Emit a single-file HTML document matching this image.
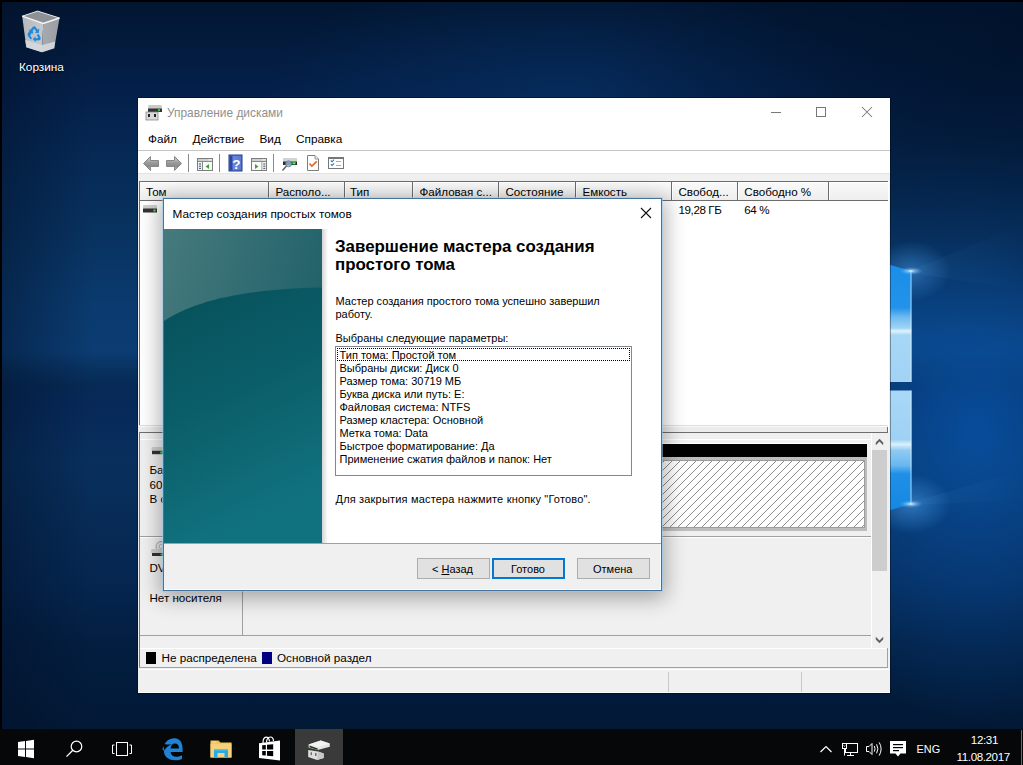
<!DOCTYPE html>
<html><head><meta charset="utf-8">
<style>
*{margin:0;padding:0;box-sizing:border-box}
html,body{width:1023px;height:765px;overflow:hidden;background:#000}
body{position:relative;font-family:"Liberation Sans",sans-serif;color:#000}
.a{position:absolute}
.t{position:absolute;white-space:nowrap;line-height:1}
svg{overflow:visible}
</style></head><body>
<div class="a" style="left:2px;top:2px;width:1021px;height:727px;overflow:hidden;background:
 radial-gradient(ellipse 40px 30px at 909px 502px, rgba(90,180,255,.45), rgba(90,180,255,0) 100%),
 radial-gradient(ellipse 40px 30px at 909px 269px, rgba(90,180,255,.4), rgba(90,180,255,0) 100%),
 radial-gradient(ellipse 420px 300px at 1021px 40px, rgba(1,18,42,.85), rgba(1,18,42,0) 100%),
 radial-gradient(ellipse 220px 290px at 975px 430px, rgba(8,82,165,.85), rgba(8,82,165,0) 100%),
 linear-gradient(90deg, rgba(2,16,40,.45) 0px, rgba(2,16,40,0) 90px),
 radial-gradient(ellipse 300px 120px at 560px 90px, rgba(8,55,110,.45), rgba(8,55,110,0) 100%),
 linear-gradient(180deg,#021631 0px,#04204a 90px,#062a56 160px,#08325f 230px,#0a3a6e 300px,#0b3c72 350px,#08315f 368px,#062a55 384px,#07295a 405px,#08305d 460px,#072b56 520px,#052650 580px,#031e40 640px,#021936 727px)"></div>
<svg class="a" style="left:0;top:0" width="1023" height="765">
 <defs>
  <linearGradient id="p1" x1="0" y1="0" x2="0" y2="1">
   <stop offset="0" stop-color="#1a8de8"/><stop offset="0.38" stop-color="#2293e8"/>
   <stop offset="0.46" stop-color="#6fbaf0"/><stop offset="0.55" stop-color="#9fd3f6"/><stop offset="0.575" stop-color="#e0f4fd"/>
   <stop offset="0.61" stop-color="#a6d7f6"/><stop offset="1" stop-color="#a2d3f5"/>
  </linearGradient>
  <linearGradient id="p2" x1="0" y1="0" x2="0" y2="1">
   <stop offset="0" stop-color="#a9d8f7"/><stop offset="0.4" stop-color="#9fd1f4"/>
   <stop offset="0.44" stop-color="#d8f1fd"/><stop offset="0.49" stop-color="#8fcaf2"/>
   <stop offset="0.61" stop-color="#6ab8ef"/><stop offset="0.68" stop-color="#1f90e6"/><stop offset="1" stop-color="#1587e2"/>
  </linearGradient>
  <radialGradient id="fl" cx="0.5" cy="0.5" r="0.5">
   <stop offset="0" stop-color="#ffffff" stop-opacity="1"/><stop offset="0.25" stop-color="#c8ecff" stop-opacity=".6"/><stop offset="1" stop-color="#4aa8f0" stop-opacity="0"/>
  </radialGradient>
  <linearGradient id="bm" x1="0" y1="0" x2="1" y2="0"><stop offset="0" stop-color="#6ab8f0" stop-opacity=".35"/><stop offset="1" stop-color="#6ab8f0" stop-opacity="0"/></linearGradient>
 </defs>
 <polygon points="912,270 1023,225 1023,290 912,273" fill="url(#bm)" opacity=".18"/>
 <polygon points="912,502 1023,470 1023,500 912,505" fill="url(#bm)" opacity=".22"/>
 <polygon points="880,262 911.5,271 911.5,382 880,382" fill="url(#p1)"/>
 <polygon points="880,390.5 911.5,390.5 911.5,504 880,513" fill="url(#p2)"/>
 <rect x="910.5" y="271" width="1" height="111" fill="#d9f1ff" opacity=".7"/>
 <rect x="910.5" y="390.5" width="1" height="113" fill="#d9f1ff" opacity=".7"/>
 <ellipse cx="911" cy="271" rx="12" ry="4" fill="url(#fl)"/>
 <ellipse cx="911" cy="504" rx="12" ry="4" fill="url(#fl)"/>
</svg>
<svg class="a" style="left:0;top:0" width="80" height="80">
 <defs>
  <linearGradient id="rbl" x1="0" y1="0" x2="1" y2="0"><stop offset="0" stop-color="#b4b8bd"/><stop offset="1" stop-color="#c6c9cd"/></linearGradient>
  <linearGradient id="rbr" x1="0" y1="0" x2="1" y2="0"><stop offset="0" stop-color="#a7abb0"/><stop offset="1" stop-color="#9a9ea3"/></linearGradient>
 </defs>
 <polygon points="22.2,16.2 43.2,23.4 42,52.3 26.3,47.2" fill="url(#rbl)"/>
 <polygon points="43.2,23.4 59.5,18 54.2,48.2 42,52.3" fill="url(#rbr)"/>
 <polygon points="22.2,16.2 37.6,11.1 59.5,18 43.2,23.4" fill="#8d9196"/>
 <polygon points="25.2,40 42.3,45 55.2,41.5 54.2,48.2 42,52.3 26.3,47.2" fill="#d5d8db" opacity=".9"/>
 <polyline points="22.2,16.2 37.6,11.1 59.5,18" fill="none" stroke="#e6e9ec" stroke-width="1"/>
 <polyline points="22.2,16.2 43.2,23.4 59.5,18" fill="none" stroke="#f4f6f8" stroke-width="1.4"/>
 <path d="M29.5 31 L33 26.8 Q34.2 25.6 35.4 26.8 L37.6 29.8 L39.4 28.8 L38.6 33.2 L34.6 32.6 L36.2 31.4 L34.2 28.8 L32 31.6 Z" fill="#1e88dc"/>
 <path d="M30.8 39.6 L28 36 Q27 34.6 28 33.2 L29.8 30.6 L28.4 29.6 L32.6 30 L33.2 34 L31.8 33 L30.2 35.4 L32 38.2 Z" fill="#1e88dc"/>
 <path d="M38.8 34 L40.6 37.8 Q41.2 39.4 39.6 40.2 L35.6 40.4 L35.6 42 L32.8 39 L35.6 36.6 L35.6 38.2 L38.4 38 L36.8 35 Z" fill="#1e88dc"/>
</svg>
<div class="t" style="left:19px;top:62.01px;font-size:11.8px;color:#fff;font-weight:400;text-shadow:0 1px 2px #000">Корзина</div>
<!-- window -->
<div class="a" style="left:137px;top:97px;width:754px;height:597px;background:rgba(0,0,0,.35);"></div>
<div class="a" style="left:138px;top:98px;width:752px;height:595px;background:#f0f0f0;"></div>
<div class="a" style="left:138px;top:98px;width:752px;height:52px;background:#fff;"></div>
<svg class="a" style="left:145px;top:103px" width="20" height="20">
 <rect x="3" y="2" width="14" height="4" rx="1.5" fill="#c9c9c9"/>
 <rect x="3" y="5.5" width="14" height="3.5" fill="#333"/>
 <circle cx="14" cy="7.2" r="1.1" fill="#3fdc3f"/>
 <rect x="1" y="9" width="12" height="8" fill="#d9d9d9" stroke="#8a8a8a" stroke-width=".8"/>
 <rect x="3" y="11" width="2" height="3" fill="#222"/>
 <rect x="9" y="11" width="2" height="3" fill="#222"/>
</svg>
<div class="t" style="left:167px;top:108.43px;font-size:11.9px;color:#8f8f8f;font-weight:400;">Управление дисками</div>
<div class="a" style="left:771px;top:112px;width:10px;height:1px;background:#777;"></div>
<div class="a" style="left:816px;top:107px;width:10px;height:10px;background:transparent;border:1px solid #777;box-sizing:border-box"></div>
<svg class="a" style="left:861px;top:106px" width="12" height="12"><path d="M1 1L11 11M11 1L1 11" stroke="#777" stroke-width="1.05"/></svg>
<div class="t" style="left:148px;top:134.01px;font-size:11.8px;color:#000;font-weight:400;">Файл</div>
<div class="t" style="left:192.5px;top:134.01px;font-size:11.8px;color:#000;font-weight:400;">Действие</div>
<div class="t" style="left:259.5px;top:134.01px;font-size:11.8px;color:#000;font-weight:400;">Вид</div>
<div class="t" style="left:296px;top:134.01px;font-size:11.8px;color:#000;font-weight:400;">Справка</div>
<div class="a" style="left:138px;top:150px;width:752px;height:1px;background:#c4c4c4;"></div>
<div class="a" style="left:138px;top:151px;width:752px;height:22px;background:#fff;"></div>
<svg class="a" style="left:138px;top:150px" width="220" height="25" viewBox="138 150 220 25">
 <defs>
  <linearGradient id="ag" x1="0" y1="0" x2="0" y2="1"><stop offset="0" stop-color="#d6d6d6"/><stop offset=".45" stop-color="#9a9a9a"/><stop offset=".7" stop-color="#8a8a8a"/><stop offset="1" stop-color="#c8c8c8"/></linearGradient>
  <linearGradient id="hg" x1="0" y1="0" x2="1" y2="0"><stop offset="0" stop-color="#6f8fe6"/><stop offset="1" stop-color="#5676d0"/></linearGradient>
 </defs>
 <path d="M143.5 163.5 L150.5 156.5 V160.5 H158.5 V166.5 H150.5 V170.5 Z" fill="url(#ag)" stroke="#888" stroke-width="1" stroke-linejoin="round"/>
 <path d="M181.5 163.5 L174.5 156.5 V160.5 H166.5 V166.5 H174.5 V170.5 Z" fill="url(#ag)" stroke="#888" stroke-width="1" stroke-linejoin="round"/>
 <rect x="188" y="154" width="1" height="18" fill="#8a8a8a"/>
 <rect x="197.5" y="158.5" width="15" height="12" fill="#fbfbfb" stroke="#7d7d7d"/>
 <rect x="198" y="159" width="14" height="2" fill="#cfcfcf"/>
 <rect x="208.5" y="159.2" width="1.2" height="1.2" fill="#fff"/><rect x="210.5" y="159.2" width="1.2" height="1.2" fill="#fff"/>
 <rect x="198" y="161" width="14" height="1" fill="#8a8a8a"/>
 <rect x="202" y="162" width="1" height="8" fill="#8a8a8a"/>
 <rect x="198" y="162" width="4" height="8" fill="#e8f0f8"/>
 <rect x="199" y="163.5" width="2" height="1" fill="#555"/><rect x="199" y="165.7" width="2" height="1" fill="#555"/><rect x="199" y="167.9" width="2" height="1" fill="#555"/>
 <path d="M209 164 L205.5 166.5 L209 169 Z" fill="#37a837"/>
 <rect x="219" y="154" width="1" height="18" fill="#8a8a8a"/>
 <rect x="229" y="155" width="13" height="16" fill="url(#hg)" stroke="#22398e" stroke-width="1"/>
 <rect x="229.5" y="155.5" width="3" height="15" fill="#2d46a3"/>
 <text x="236.3" y="168.5" font-family="Liberation Sans" font-size="13.5" font-weight="700" fill="#fff" text-anchor="middle">?</text>
 <rect x="251.5" y="158.5" width="15" height="12" fill="#fbfbfb" stroke="#7d7d7d"/>
 <rect x="252" y="159" width="14" height="2" fill="#cfcfcf"/>
 <rect x="262.5" y="159.2" width="1.2" height="1.2" fill="#fff"/><rect x="264.5" y="159.2" width="1.2" height="1.2" fill="#fff"/>
 <rect x="252" y="161" width="14" height="1" fill="#8a8a8a"/>
 <rect x="261.5" y="162" width="1" height="8" fill="#8a8a8a"/>
 <rect x="262.5" y="162" width="3.5" height="8" fill="#e8f0f8"/>
 <rect x="263.3" y="163.5" width="2" height="1" fill="#555"/><rect x="263.3" y="165.7" width="2" height="1" fill="#555"/><rect x="263.3" y="167.9" width="2" height="1" fill="#555"/>
 <path d="M255 164 L258.5 166.5 L255 169 Z" fill="#37a837"/>
 <rect x="273" y="154" width="1" height="18" fill="#8a8a8a"/>
 <rect x="283" y="158" width="14" height="3.5" fill="#d4d4d4"/>
 <rect x="283" y="161.5" width="14" height="3.5" fill="#2b2b2b"/>
 <rect x="292" y="162" width="4" height="2.5" fill="#1f9a1f"/><circle cx="294" cy="163.2" r="1" fill="#6ff06f"/>
 <circle cx="288.6" cy="163.8" r="3" fill="#8fb3d6" fill-opacity=".85" stroke="#5c7a99" stroke-width=".8"/>
 <path d="M286.5 166 L282.5 170.5" stroke="#555" stroke-width="1.2"/>
 <path d="M307.5 155.5 H315 L318.5 159 V170.5 H307.5 Z" fill="#fff" stroke="#7d7d7d"/>
 <path d="M315 155.5 V159 H318.5" fill="#eee" stroke="#7d7d7d" stroke-width=".8"/>
 <path d="M309.5 163.5 L311.8 166 L316.8 161.3" stroke="#e3672a" stroke-width="1.7" fill="none"/>
 <rect x="328.5" y="157.5" width="15" height="11" fill="#fff" stroke="#777"/>
 <rect x="328.5" y="157" width="15" height="2" fill="#777"/>
 <path d="M330.8 160.5 l1.3 1.3 l2 -2.2 M330.8 164.2 l1.3 1.3 l2 -2.2" stroke="#2e79d0" stroke-width="1.1" fill="none"/>
 <rect x="336" y="161" width="5" height="1" fill="#aaa"/><rect x="336" y="165" width="5" height="1" fill="#aaa"/>
</svg>
<div class="a" style="left:138px;top:173px;width:752px;height:8px;background:#f0f0f0;"></div>
<div class="a" style="left:138px;top:173px;width:752px;height:1px;background:#e3e3e3;"></div>
<div class="a" style="left:139px;top:181px;width:750px;height:251px;background:#fff;"></div>
<div class="a" style="left:139px;top:181px;width:749px;height:1px;background:#6d6d6d;"></div>
<div class="a" style="left:139px;top:181px;width:1px;height:251px;background:#6d6d6d;"></div>
<div class="a" style="left:140px;top:182px;width:748px;height:18px;background:#f0f0f0;background:linear-gradient(#fafafa,#eeeeee)"></div>
<div class="a" style="left:140px;top:182px;width:748px;height:1px;background:#fff;"></div>
<div class="a" style="left:140px;top:200px;width:748px;height:1px;background:#6d6d6d;"></div>
<div class="a" style="left:268px;top:182px;width:1px;height:18px;background:#6d6d6d;"></div>
<div class="a" style="left:269px;top:183px;width:1px;height:17px;background:#fff;"></div>
<div class="a" style="left:344px;top:182px;width:1px;height:18px;background:#6d6d6d;"></div>
<div class="a" style="left:345px;top:183px;width:1px;height:17px;background:#fff;"></div>
<div class="a" style="left:412px;top:182px;width:1px;height:18px;background:#6d6d6d;"></div>
<div class="a" style="left:413px;top:183px;width:1px;height:17px;background:#fff;"></div>
<div class="a" style="left:498px;top:182px;width:1px;height:18px;background:#6d6d6d;"></div>
<div class="a" style="left:499px;top:183px;width:1px;height:17px;background:#fff;"></div>
<div class="a" style="left:575px;top:182px;width:1px;height:18px;background:#6d6d6d;"></div>
<div class="a" style="left:576px;top:183px;width:1px;height:17px;background:#fff;"></div>
<div class="a" style="left:671px;top:182px;width:1px;height:18px;background:#6d6d6d;"></div>
<div class="a" style="left:672px;top:183px;width:1px;height:17px;background:#fff;"></div>
<div class="a" style="left:737px;top:182px;width:1px;height:18px;background:#6d6d6d;"></div>
<div class="a" style="left:738px;top:183px;width:1px;height:17px;background:#fff;"></div>
<div class="a" style="left:828px;top:182px;width:1px;height:18px;background:#6d6d6d;"></div>
<div class="a" style="left:829px;top:183px;width:1px;height:17px;background:#fff;"></div>
<div class="t" style="left:146px;top:185.88px;font-size:11.6px;color:#000;font-weight:400;">Том</div>
<div class="t" style="left:275.5px;top:185.88px;font-size:11.6px;color:#000;font-weight:400;">Располо...</div>
<div class="t" style="left:350px;top:185.88px;font-size:11.6px;color:#000;font-weight:400;">Тип</div>
<div class="t" style="left:419.5px;top:185.88px;font-size:11.6px;color:#000;font-weight:400;">Файловая с...</div>
<div class="t" style="left:505.5px;top:185.88px;font-size:11.6px;color:#000;font-weight:400;">Состояние</div>
<div class="t" style="left:582.5px;top:185.88px;font-size:11.6px;color:#000;font-weight:400;">Емкость</div>
<div class="t" style="left:678.5px;top:185.88px;font-size:11.6px;color:#000;font-weight:400;">Свобод...</div>
<div class="t" style="left:744.3px;top:185.88px;font-size:11.6px;color:#000;font-weight:400;">Свободно %</div>
<svg class="a" style="left:142px;top:204px" width="16" height="12">
 <rect x="1" y="1" width="14" height="4" rx="1" fill="#cfcfcf"/>
 <rect x="1" y="4.5" width="14" height="4" fill="#333"/>
 <circle cx="12.5" cy="6.5" r="1.2" fill="#3fdc3f"/>
</svg>
<div class="t" style="left:678.5px;top:203.88px;font-size:11.6px;color:#000;font-weight:400;letter-spacing:-0.4px">19,28 ГБ</div>
<div class="t" style="left:744.3px;top:203.88px;font-size:11.6px;color:#000;font-weight:400;letter-spacing:-0.4px">64 %</div>
<div class="a" style="left:139px;top:425px;width:749px;height:1px;background:#dedede;"></div>
<div class="a" style="left:139px;top:426px;width:749px;height:1px;background:#fafafa;"></div>
<div class="a" style="left:139px;top:427px;width:749px;height:5px;background:#ececec;"></div>
<div class="a" style="left:139px;top:432px;width:749px;height:1px;background:#6e6e6e;"></div>
<div class="a" style="left:887px;top:427px;width:1px;height:6px;background:#6e6e6e;"></div>
<div class="a" style="left:140px;top:433px;width:732px;height:203px;background:#f0f0f0;"></div>
<div class="a" style="left:139px;top:432px;width:1px;height:236px;background:#7a7a7a;"></div>
<div class="a" style="left:140px;top:439px;width:732px;height:1px;background:#fff;"></div>
<svg class="a" style="left:150px;top:446px" width="20" height="12">
 <rect x="1.5" y="1" width="16" height="4" rx="1" fill="#cfcfcf"/>
 <rect x="2" y="4.8" width="16" height="3.4" fill="#333"/>
 <circle cx="11.3" cy="6.5" r="1.2" fill="#3fdc3f"/>
</svg>
<div class="t" style="left:149.5px;top:464.18px;font-size:11.6px;color:#000;font-weight:400;">Базовый</div>
<div class="t" style="left:149.5px;top:479.18px;font-size:11.6px;color:#000;font-weight:400;">60,00 ГБ</div>
<div class="t" style="left:149.5px;top:493.18px;font-size:11.6px;color:#000;font-weight:400;">В сети</div>
<div class="a" style="left:242px;top:439px;width:1px;height:97px;background:#a0a0a0;"></div>
<div class="a" style="left:140px;top:536px;width:732px;height:1px;background:#a0a0a0;"></div>
<div class="a" style="left:140px;top:537px;width:732px;height:1px;background:#fff;"></div>
<div class="a" style="left:661px;top:443px;width:206px;height:1px;background:#fff;"></div>
<div class="a" style="left:661px;top:444px;width:206px;height:13px;background:#000;"></div>
<div class="a" style="left:661px;top:457px;width:206px;height:74px;background:#bdbdbd;"></div>
<div class="a" style="left:661px;top:460px;width:204px;height:68px;background:#9c9c9c;"></div>
<svg class="a" style="left:661px;top:461px" width="203" height="66">
 <defs><pattern id="hp" width="8" height="8" patternUnits="userSpaceOnUse" x="3" y="0"><rect width="8" height="8" fill="#fff"/><rect x="0" y="7" width="1" height="1" fill="#8c8c8c"/><rect x="1" y="6" width="1" height="1" fill="#8c8c8c"/><rect x="2" y="5" width="1" height="1" fill="#8c8c8c"/><rect x="3" y="4" width="1" height="1" fill="#8c8c8c"/><rect x="4" y="3" width="1" height="1" fill="#8c8c8c"/><rect x="5" y="2" width="1" height="1" fill="#8c8c8c"/><rect x="6" y="1" width="1" height="1" fill="#8c8c8c"/><rect x="7" y="0" width="1" height="1" fill="#8c8c8c"/></pattern></defs>
 <rect width="203" height="66" fill="url(#hp)" shape-rendering="crispEdges"/>
</svg>
<svg class="a" style="left:140px;top:536px" width="30" height="24">
 <circle cx="21" cy="10.5" r="5" fill="#e4e4e4" stroke="#a8a8a8" stroke-width="1"/>
 <circle cx="21" cy="10.5" r="1.8" fill="#fafafa" stroke="#a0a0a0" stroke-width=".8"/>
 <rect x="11" y="13" width="13" height="4" rx="1" fill="#cfcfcf"/>
 <rect x="12" y="17" width="12" height="3" fill="#333"/>
 <circle cx="21.5" cy="18.5" r="1.1" fill="#3fdc3f"/>
</svg>
<div class="t" style="left:149.5px;top:562.18px;font-size:11.6px;color:#000;font-weight:400;">DVD-ROM 0</div>
<div class="t" style="left:149.5px;top:592.18px;font-size:11.6px;color:#000;font-weight:400;">Нет носителя</div>
<div class="a" style="left:242px;top:537px;width:1px;height:99px;background:#a0a0a0;"></div>
<div class="a" style="left:140px;top:635px;width:732px;height:1px;background:#a0a0a0;"></div>
<div class="a" style="left:871px;top:433px;width:1px;height:215px;background:#fff;"></div>
<div class="a" style="left:872px;top:433px;width:16px;height:215px;background:#f0f0f0;"></div>
<div class="a" style="left:872px;top:450px;width:15px;height:121px;background:#cdcdcd;"></div>
<svg class="a" style="left:0;top:0" width="1023" height="765"><polygon points="875.8,445.2 875.8,442.6 879.5,438.8 883.2,442.6 883.2,445.2 879.5,441.6" fill="#606060"/><polygon points="875.8,636.8 875.8,639.4 879.5,643.2 883.2,639.4 883.2,636.8 879.5,640.4" fill="#606060"/></svg>
<div class="a" style="left:140px;top:648px;width:748px;height:20px;background:#f0f0f0;"></div>
<div class="a" style="left:140px;top:648px;width:748px;height:1px;background:#fff;"></div>
<div class="a" style="left:139px;top:667px;width:749px;height:1px;background:#a0a0a0;"></div>
<div class="a" style="left:887px;top:648px;width:1px;height:20px;background:#a0a0a0;"></div>
<div class="a" style="left:146px;top:652px;width:10px;height:12px;background:#000;"></div>
<div class="t" style="left:161.5px;top:652.10px;font-size:11.7px;color:#000;font-weight:400;">Не распределена</div>
<div class="a" style="left:262px;top:652px;width:10px;height:12px;background:#000080;"></div>
<div class="t" style="left:277px;top:652.10px;font-size:11.7px;color:#000;font-weight:400;">Основной раздел</div>
<div class="a" style="left:139px;top:669px;width:751px;height:1px;background:#fff;"></div>
<div class="a" style="left:668px;top:672px;width:1px;height:20px;background:#c8c8c8;"></div>
<div class="a" style="left:801px;top:672px;width:1px;height:20px;background:#c8c8c8;"></div>
<div class="a" style="left:138px;top:692px;width:752px;height:1px;background:#fff;"></div>
<!-- dialog -->
<div class="a" style="left:163px;top:198px;width:499px;height:393px;background:#fff;box-shadow:0 0 0 1px rgba(150,205,250,.55), 0 4px 20px 3px rgba(0,0,0,.33)"></div>
<div class="a" style="left:163px;top:198px;width:499px;height:393px;background:transparent;border:1px solid #44739f;box-sizing:border-box"></div>
<div class="t" style="left:172.5px;top:209.01px;font-size:11.8px;color:#000;font-weight:400;">Мастер создания простых томов</div>
<svg class="a" style="left:640px;top:207px" width="12" height="12"><path d="M1 1L11 11M11 1L1 11" stroke="#111" stroke-width="1.1"/></svg>
<svg class="a" style="left:164px;top:229px" width="158" height="314">
 <defs>
  <linearGradient id="tg1" x1="0" y1="0" x2="1" y2="0.6"><stop offset="0" stop-color="#467a7d"/><stop offset="1" stop-color="#1a5d66"/></linearGradient>
  <linearGradient id="tg2" x1="0" y1="0" x2="0.3" y2="1"><stop offset="0" stop-color="#07505a"/><stop offset="0.5" stop-color="#0a5e69"/><stop offset="1" stop-color="#11727f"/></linearGradient>
 </defs>
 <rect width="158" height="314" fill="url(#tg1)"/>
 <path d="M0 92 C 30 72, 80 60, 158 58.5 V314 H0 Z" fill="url(#tg2)"/>
</svg>
<div class="a" style="left:322px;top:229px;width:6px;height:314px;background:transparent;background:linear-gradient(90deg,#d4d4d4,rgba(255,255,255,0))"></div>
<div class="t" style="left:335px;top:238.69px;font-size:16.9px;color:#000;font-weight:700;">Завершение мастера создания</div>
<div class="t" style="left:335px;top:257.19px;font-size:16.9px;color:#000;font-weight:700;">простого тома</div>
<div class="t" style="left:335.5px;top:295.69px;font-size:11px;color:#000;font-weight:400;">Мастер создания простого тома успешно завершил</div>
<div class="t" style="left:335.5px;top:308.69px;font-size:11px;color:#000;font-weight:400;">работу.</div>
<div class="t" style="left:335.5px;top:332.69px;font-size:11px;color:#000;font-weight:400;">Выбраны следующие параметры:</div>
<div class="a" style="left:335px;top:346px;width:297px;height:130px;background:#fff;border:1px solid #828790;box-sizing:border-box"></div>
<div class="a" style="left:337px;top:348px;width:293px;height:13px;background:transparent;border:1px dotted #000;box-sizing:border-box"></div>
<div class="t" style="left:339.5px;top:349.69px;font-size:11px;color:#000;font-weight:400;">Тип тома: Простой том</div>
<div class="t" style="left:339.5px;top:362.69px;font-size:11px;color:#000;font-weight:400;">Выбраны диски: Диск 0</div>
<div class="t" style="left:339.5px;top:375.69px;font-size:11px;color:#000;font-weight:400;">Размер тома: 30719 МБ</div>
<div class="t" style="left:339.5px;top:388.69px;font-size:11px;color:#000;font-weight:400;">Буква диска или путь: E:</div>
<div class="t" style="left:339.5px;top:401.69px;font-size:11px;color:#000;font-weight:400;">Файловая система: NTFS</div>
<div class="t" style="left:339.5px;top:414.69px;font-size:11px;color:#000;font-weight:400;">Размер кластера: Основной</div>
<div class="t" style="left:339.5px;top:427.69px;font-size:11px;color:#000;font-weight:400;">Метка тома: Data</div>
<div class="t" style="left:339.5px;top:440.69px;font-size:11px;color:#000;font-weight:400;">Быстрое форматирование: Да</div>
<div class="t" style="left:339.5px;top:453.69px;font-size:11px;color:#000;font-weight:400;">Применение сжатия файлов и папок: Нет</div>
<div class="t" style="left:335.5px;top:493.69px;font-size:11px;color:#000;font-weight:400;letter-spacing:0.18px">Для закрытия мастера нажмите кнопку "Готово".</div>
<div class="a" style="left:164px;top:543px;width:497px;height:1px;background:#a0a0a0;"></div>
<div class="a" style="left:164px;top:544px;width:497px;height:46px;background:#f0f0f0;"></div>
<div class="a" style="left:164px;top:589px;width:497px;height:1px;background:#f6ffff;"></div>
<div class="a" style="left:660px;top:544px;width:1px;height:46px;background:#f6ffff;"></div>
<div class="a" style="left:417px;top:558px;width:73px;height:21px;background:#e1e1e1;border:1px solid #adadad;box-sizing:border-box"></div>
<div class="a" style="left:492px;top:558px;width:73px;height:21px;background:#e1e1e1;border:2px solid #0078d7;box-sizing:border-box"></div>
<div class="a" style="left:577px;top:558px;width:73px;height:21px;background:#e1e1e1;border:1px solid #adadad;box-sizing:border-box"></div>
<div class="t" style="left:432px;top:563.69px;font-size:11px;color:#000;font-weight:400;">&lt; <u>Н</u>азад</div>
<div class="t" style="left:511px;top:563.69px;font-size:11px;color:#000;font-weight:400;">Готово</div>
<div class="t" style="left:593px;top:563.69px;font-size:11px;color:#000;font-weight:400;">Отмена</div>
<!-- taskbar -->
<div class="a" style="left:0px;top:729px;width:1023px;height:36px;background:#060709;"></div>
<div class="a" style="left:295px;top:729px;width:48px;height:36px;background:#3a3a3a;"></div>
<svg class="a" style="left:0;top:729px" width="1023" height="36">
 <path d="M18 13 L25 12 V19.5 H18 Z M26 11.9 L34 10.8 V19.5 H26 Z M18 20.5 H25 V28 L18 27 Z M26 20.5 H34 V29.2 L26 28.1 Z" fill="#fff"/>
 <circle cx="76.5" cy="17.5" r="5.3" fill="none" stroke="#fff" stroke-width="1.2"/>
 <path d="M72.8 21.3 L66.5 27.6" stroke="#fff" stroke-width="1.3"/>
 <rect x="116.5" y="13.5" width="11" height="13" fill="none" stroke="#fff" stroke-width="1"/>
 <path d="M114.5 16 H112.5 V24.5 H114.5 M129.5 16 H131.5 V24.5 H129.5" fill="none" stroke="#fff" stroke-width="1"/>
 <path d="M162.5 20.5 C 164 13, 169 9.2, 174.5 9.2 C 180.5 9.2, 182.6 14.5, 182.6 20 V23 H170.6 C 171 26.3, 173.5 27.8, 176.5 27.8 C 178.8 27.8, 180.5 27.2, 182 26.3 V30 C 180.3 30.8, 178 31.3, 175.5 31.3 C 168.5 31.3, 164 27.5, 164 22.5 C 164 21.5, 163.3 21, 162.5 20.5 Z" fill="#1e82d6"/>
 <path d="M170.6 19.6 C 170.8 16.3, 172.6 14.6, 175 14.6 C 177.4 14.6, 179 16.3, 179 19.6 Z" fill="#060709"/>
 <path d="M162 14 C 165 15.5, 168.5 15.8, 171.8 15.2 C 168 16.8, 165.5 19, 164.5 21.5 C 164 19, 163 16.5, 162 14 Z" fill="#060709"/>
 <path d="M210.5 11.5 H218.5 L220.5 13.5 H231.5 V28.5 H210.5 Z" fill="#e9bf55"/>
 <path d="M210.5 14.5 H231.5 V28.5 H210.5 Z" fill="#f5d27a"/>
 <rect x="211.5" y="12.5" width="5" height="1" fill="#fff3c0" opacity=".7"/>
 <path d="M214 20 H228 V28.5 H224.5 V24 H217.5 V28.5 H214 Z" fill="#28a8e8"/>
 <path d="M214 20 H228 V21.5 H214 Z" fill="#4cc3f5"/>
 <path d="M259 14.2 L280 11.6 V31.5 L259 28.9 Z" fill="#fff"/>
 <path d="M263 14 C 263 6.5, 269 6.5, 269.5 12.5 M266.5 13.2 C 267 6.5, 273.5 6.5, 273.5 12" fill="none" stroke="#fff" stroke-width="1.2"/>
 <path d="M262.2 16.3 L265.8 16 V20.6 H262.2 Z M267 15.8 L273.2 15.2 V20.6 H267 Z M262.2 21.9 H265.8 V26.6 L262.2 26.2 Z M267 21.9 H273.2 V27.2 L267 26.7 Z" fill="#000"/>
 <path d="M308.6 15.5 L320.7 11.4 L329.8 14.6 V17.7 L317.7 21 L308.6 18.5 Z" fill="#e4e4e4"/>
 <path d="M308.6 15.5 L320.7 11.4 L329.8 14.6 L317.7 18.3 Z" fill="#f2f2f2"/>
 <path d="M309.5 16.6 L317.7 19.6 V21 L309.5 18.3 Z" fill="#203a20"/>
 <path d="M308.2 21 L318 22.4 L323.7 24.6 V29 L317 31 L308.2 28 Z" fill="#dedede"/>
 <path d="M318 22.4 L323.7 24.6 V29 L317 31 Z" fill="#c8c8c8"/>
 <rect x="310.6" y="23.2" width="1.4" height="3" fill="#707070"/><rect x="315" y="24" width="1.5" height="3" fill="#707070"/>
 <path d="M820.5 23 L826 17.5 L831.5 23" fill="none" stroke="#fff" stroke-width="1.2"/>
 <rect x="845.5" y="14.5" width="12" height="9" fill="none" stroke="#fff" stroke-width="1"/>
 <rect x="842.5" y="14.5" width="4" height="5" fill="#060709" stroke="#fff" stroke-width="1"/>
 <path d="M843.6 16.3 L844.5 17.5 L845.4 16.3" fill="none" stroke="#fff" stroke-width=".7"/>
 <path d="M844.5 19.5 V26.5 M850.5 23.5 V26.5 M847 26.5 H854" fill="none" stroke="#fff" stroke-width="1"/>
 <path d="M866.5 17.5 H869 L872 14.5 V25.5 L869 22.5 H866.5 Z" fill="none" stroke="#fff" stroke-width="1" stroke-linejoin="miter"/>
 <path d="M874.3 17 Q 875.8 19.8 874.3 22.6 M876.6 15.3 Q 879.2 19.8 876.6 24.3 M879.2 13.4 Q 883 19.8 879.2 26.6" fill="none" stroke="#fff" stroke-width="1"/>
 <path d="M890 12 H906 V24.5 H900.5 L898 27.5 L895.5 24.5 H890 Z" fill="#fff"/>
 <rect x="893" y="15" width="10" height="1.2" fill="#000"/><rect x="893" y="18" width="10" height="1.2" fill="#000"/><rect x="893" y="21" width="6" height="1.2" fill="#000"/>
 <rect x="1021" y="1" width="1" height="35" fill="#6a6a6a"/>
</svg>
<div class="t" style="left:916.5px;top:743.57px;font-size:10.9px;color:#fff;font-weight:400;">ENG</div>
<div class="t" style="left:970.8px;top:734.18px;font-size:11.6px;color:#fff;font-weight:400;letter-spacing:-0.35px">12:31</div>
<div class="t" style="left:956.6px;top:751.18px;font-size:11.6px;color:#fff;font-weight:400;letter-spacing:-0.4px">11.08.2017</div>
</body></html>
